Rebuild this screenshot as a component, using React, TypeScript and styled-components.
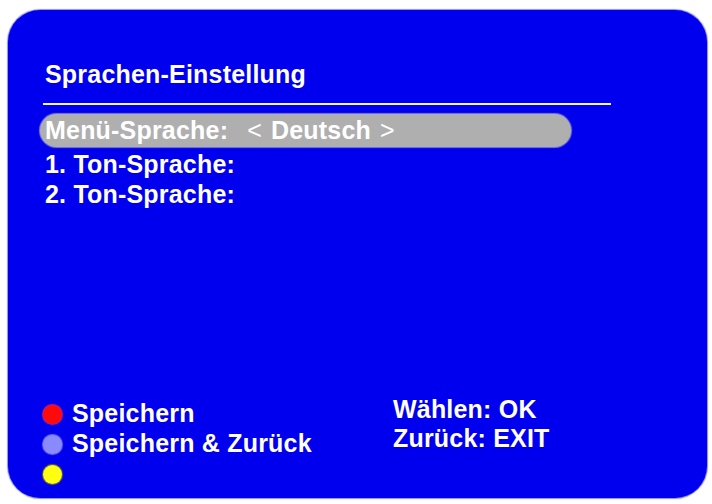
import React, {FC} from 'react';
import styled, {createGlobalStyle} from "styled-components";

const GlobalStyle = createGlobalStyle`
  html, body {
    margin: 0;
    padding: 0;
    background: #fff;
  }
  body {
    font-family: "Liberation Sans", Arial, Helvetica, sans-serif;
  }
`

const Screen = styled.div`
  width: 712px;
  height: 504px;
  box-sizing: border-box;
  padding: 10px 5px 6px 8px;
  display: flex;
`

const Panel = styled.div`
  flex: 1;
  display: flex;
  flex-direction: column;
  box-sizing: border-box;
  padding: 49px 0 10px 32px;
  background-color: #0000ee;
  border-radius: 32px;
  box-shadow: 0 0 1px 1px #8c8cf0;
  color: #fff;
  font-size: 25px;
  font-weight: bold;
  letter-spacing: 0.2px;
`

const Title = styled.div`
  line-height: 30px;
  padding-left: 5px;
`

const Separator = styled.div`
  width: 568px;
  height: 2px;
  margin: 14px 0 9px 3px;
  background-color: #f4f4ff;
`

const MenuRow = styled.div<{ $active?: boolean }>`
  display: flex;
  align-items: center;
  padding-left: 5px;
  height: ${p => p.$active ? '33px' : '30px'};
  width: ${p => p.$active ? '526px' : 'auto'};
  margin-bottom: ${p => p.$active ? '2px' : '0'};
  border-radius: 17px;
  background-color: ${p => p.$active ? '#afafaf' : 'transparent'};
  box-shadow: ${p => p.$active ? '0 0 1px 1px #7a7ad8' : 'none'};
`

const Value = styled.span`
  display: inline-flex;
  gap: 9px;
  margin-left: 19px;
`

const Arrow = styled.span`
  font-weight: normal;
`

const Spacer = styled.div`
  flex: 1;
`

const Footer = styled.div`
  display: grid;
  grid-template-columns: 353px auto;
`

const KeyList = styled.div`
  display: flex;
  flex-direction: column;
`

const KeyRow = styled.div`
  display: flex;
  align-items: center;
  height: 30px;
  padding-left: 3px;
`

const Dot = styled.span<{ $color: string; $edge: string }>`
  width: 19px;
  height: 19px;
  border-radius: 50%;
  margin: 2px 10px 0 0;
  flex-shrink: 0;
  background-color: ${p => p.$color};
  box-shadow: 0 0 1px 1px ${p => p.$edge};
`

const HelpList = styled.div`
  display: flex;
  flex-direction: column;
  margin-top: -3px;
`

const HelpRow = styled.div`
  line-height: 29px;
`

const keys = [
    {color: '#ff0a0a', edge: '#c0207a', label: 'Speichern'},
    {color: '#8a8aff', edge: '#6f6ff0', label: 'Speichern & Zurück'},
    {color: '#ffff10', edge: '#6a6a40', label: ''},
];

const App: FC = () => {
    return (
        <>
            <GlobalStyle/>
            <Screen>
                <Panel>
                    <Title>Sprachen-Einstellung</Title>
                    <Separator/>
                    <MenuRow $active>
                        Menü-Sprache:
                        <Value>
                            <Arrow>&lt;</Arrow>
                            <span>Deutsch</span>
                            <Arrow>&gt;</Arrow>
                        </Value>
                    </MenuRow>
                    <MenuRow>1. Ton-Sprache:</MenuRow>
                    <MenuRow>2. Ton-Sprache:</MenuRow>
                    <Spacer/>
                    <Footer>
                        <KeyList>
                            {keys.map((k, i) => (
                                <KeyRow key={i}>
                                    <Dot $color={k.color} $edge={k.edge}/>
                                    {k.label}
                                </KeyRow>
                            ))}
                        </KeyList>
                        <HelpList>
                            <HelpRow>Wählen: OK</HelpRow>
                            <HelpRow>Zurück: EXIT</HelpRow>
                        </HelpList>
                    </Footer>
                </Panel>
            </Screen>
        </>
    );
};

export default App;
